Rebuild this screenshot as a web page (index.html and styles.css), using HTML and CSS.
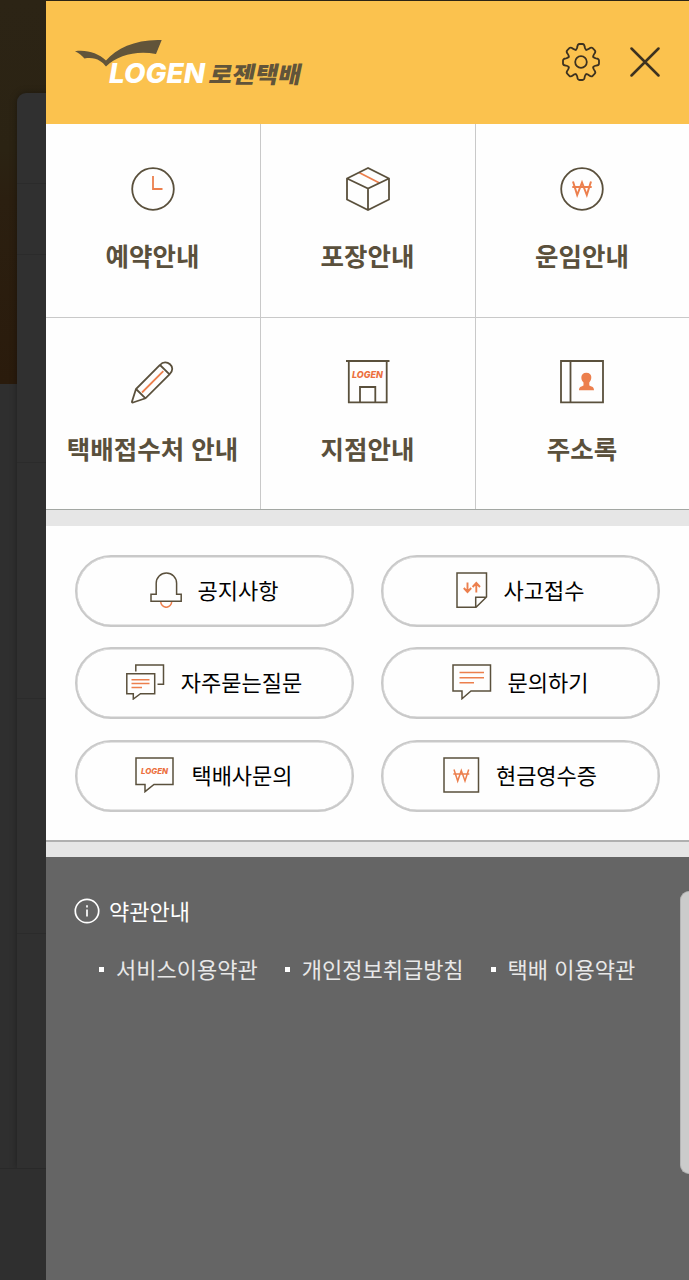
FILE: index.html
```html
<!DOCTYPE html>
<html lang="ko">
<head>
  <meta charset="UTF-8">
  <meta name="viewport" content="width=device-width, initial-scale=1.0">
  <title>로젠택배</title>
  <link rel="stylesheet" href="styles.css">
</head>
<body>

  <div class="backdrop">
    <div class="backdrop-photo"></div>
    <div class="backdrop-card"></div>
    <div class="backdrop-bottom"></div>
  </div>

  <div class="side-menu">
    <header class="menu-header">
      <svg class="logo" width="240" height="68" viewBox="0 -8 240 68">
        <path class="logo-bird" d="M1 15.200C13 13.500 24 17 32 24.500C43 12 62 3 87.700 4L82 18C62 14.500 44 19 32 30.500C28 25.500 22 20.500 10.500 22.500C8 19.500 5 17 1 15.200Z"/>
        <text class="logo-en" x="35" y="47" textLength="96" lengthAdjust="spacingAndGlyphs">LOGEN</text>
        <text class="logo-ko" transform="translate(134 47) skewX(-12)" textLength="92" lengthAdjust="spacingAndGlyphs">로젠택배</text>
      </svg>
      <div class="header-buttons">
        <svg class="icon-dark" width="40" height="40" viewBox="-20 -20 40 40">
          <defs>
            <path id="tooth" d="M-5.100 -12.300C-4 -12.800 -3.900 -13.600 -3.700 -15Q-3.400 -18 -1.500 -18H1.500Q3.400 -18 3.700 -15C3.900 -13.600 4 -12.800 5.100 -12.300"/>
          </defs>
          <use href="#tooth"/>
          <use href="#tooth" transform="rotate(45)"/>
          <use href="#tooth" transform="rotate(90)"/>
          <use href="#tooth" transform="rotate(135)"/>
          <use href="#tooth" transform="rotate(180)"/>
          <use href="#tooth" transform="rotate(225)"/>
          <use href="#tooth" transform="rotate(270)"/>
          <use href="#tooth" transform="rotate(315)"/>
          <circle r="5.800"/>
        </svg>
        <svg class="icon-dark icon-close" width="30" height="30" viewBox="0 0 30 30">
          <path d="M1.500 1.500L28.500 28.500M28.500 1.500L1.500 28.500"/>
        </svg>
      </div>
    </header>

    <nav class="main-grid">
      <a class="main-item">
        <svg class="icon" width="44" height="44" viewBox="0 0 44 44">
          <circle cx="22" cy="22" r="20.800"/>
          <path class="point" d="M22 9V22H31.500"/>
        </svg>
        <span>예약안내</span>
      </a>
      <a class="main-item">
        <svg class="icon" width="44" height="44" viewBox="0 0 44 44">
          <path class="point" d="M13 5.500L33.500 16"/>
          <path d="M22 1L1 11.500V32.500L22 43L43 32.500V11.500ZM1 11.500L22 21.500L43 11.500M22 21.500V43"/>
        </svg>
        <span>포장안내</span>
      </a>
      <a class="main-item">
        <svg class="icon" width="44" height="44" viewBox="0 0 44 44">
          <circle cx="22" cy="22" r="20.800"/>
          <path class="point won" d="M13 14.500L17.200 28L22 15.500L26.800 28L31 14.500M12.300 20H31.700"/>
        </svg>
        <span>운임안내</span>
      </a>
      <a class="main-item">
        <svg class="icon" width="44" height="44" viewBox="0 0 44 44">
          <path class="point" d="M11 32.500L32.300 11.200"/>
          <path d="M1 41.500L5 29L29 5C35 -2 46.500 7 38.500 14.300L14.500 38.300L2 42.500Q0.700 42.800 1 41.500ZM5 29L14.500 38.300M29 5L38.500 14.300"/>
        </svg>
        <span>택배접수처 안내</span>
      </a>
      <a class="main-item">
        <svg class="icon" width="44" height="44" viewBox="0 0 44 44">
          <path d="M0 1H43.500M2.800 1V42.300H40.700V1M14 42V27H29.300V42"/>
          <text class="shop-sign" x="6" y="17.700" textLength="31" lengthAdjust="spacingAndGlyphs">LOGEN</text>
        </svg>
        <span>지점안내</span>
      </a>
      <a class="main-item">
        <svg class="icon" width="44" height="44" viewBox="0 0 44 44">
          <path d="M1 1H43V42.300H1ZM10.500 1V42"/>
          <path class="person" d="M26.300 12.800C33 12.800 32 20 29.300 22.500V25.500C31 26.500 34 26.500 34 30.300H19C19 26.500 22 26.500 23.500 25.500V22.500C20.500 20 20 12.800 26.300 12.800Z"/>
        </svg>
        <span>주소록</span>
      </a>
    </nav>

    <section class="pill-grid">
      <a class="pill">
        <svg class="icon thin" width="32" height="36" viewBox="0 0 32 36">
          <path class="point" d="M10.700 29.500A5.500 5.800 0 0 0 21.700 29.500"/>
          <path d="M1 29.300V22.300H6.200V11.300A10.200 10.300 0 0 1 26.600 11.300V22.300H31.200V29.300Z"/>
        </svg>
        <span>공지사항</span>
      </a>
      <a class="pill">
        <svg class="icon thin" width="32" height="36" viewBox="0 0 32 36">
          <path d="M1 1H30.500V25L20 35.300H1ZM30.500 25.200H19.700V35.300"/>
          <path class="point arrows" d="M11.500 10.500V20M7.800 16L11.500 20L15.200 16M20.300 20.500V11M16.600 15L20.300 11L24 15"/>
        </svg>
        <span>사고접수</span>
      </a>
      <a class="pill">
        <svg class="icon thin" width="39" height="36" viewBox="0 0 39 36">
          <path d="M9.800 7.500V1H37.500V20.200H31.500M0.800 9.700H28.700V29.700H14.500L7.300 35V29.700H0.800Z"/>
          <path class="point" d="M5.500 15.700H23.500M5.500 19.500H23.500M5.500 23.500H16"/>
        </svg>
        <span>자주묻는질문</span>
      </a>
      <a class="pill">
        <svg class="icon thin" width="40" height="36" viewBox="0 0 40 36">
          <path d="M1 1H38.500V27H19L10 34.700V27H1Z"/>
          <path class="point" d="M7.500 8.500H32M7.500 13.700H32M7.500 18.700H22"/>
        </svg>
        <span>문의하기</span>
      </a>
      <a class="pill">
        <svg class="icon thin" width="40" height="36" viewBox="0 0 40 36">
          <path d="M1 1H38V27.500H19L10 34.700V27.500H1Z"/>
          <text class="bubble-sign" x="6" y="17" textLength="27" lengthAdjust="spacingAndGlyphs">LOGEN</text>
        </svg>
        <span>택배사문의</span>
      </a>
      <a class="pill">
        <svg class="icon thin" width="37" height="36" viewBox="0 0 37 36">
          <path d="M1 1H35.500V35H1Z"/>
          <path class="point" d="M11 12.500L14.700 24L18.300 13.500L22 24L25.700 12.500M10.300 17H26.300"/>
        </svg>
        <span>현금영수증</span>
      </a>
    </section>

    <footer class="terms">
      <h2 class="terms-title">
        <svg width="26" height="26" viewBox="0 0 26 26">
          <circle cx="13" cy="13" r="11.700"/>
          <path d="M13 7.300V9.500M13 11.500V18.500"/>
        </svg>
        <span>약관안내</span>
      </h2>
      <ul class="terms-list">
        <li><span>서비스이용약관</span></li>
        <li><span>개인정보취급방침</span></li>
        <li><span>택배 이용약관</span></li>
      </ul>
    </footer>
  </div>

  <div class="edge-handle"></div>

</body>
</html>
```
FILE: styles.css
```css
* {
  box-sizing: border-box;
}

body {
  margin: 0;
  display: flex;
  position: relative;
  height: 1280px;
  overflow: hidden;
  background: #2f2f2f;
  font-family: "Noto Sans CJK KR", "Noto Sans", sans-serif;
}

/* dimmed page behind the menu */
.backdrop {
  position: relative;
  width: 46px;
  height: 1280px;
  flex: none;
  overflow: hidden;
}

.backdrop-photo {
  height: 384px;
  background: linear-gradient(#2c2415 0, #2b2313 150px, #2b1f10 200px, #2a1b0c 384px);
}

.backdrop-card {
  position: absolute;
  left: 17px;
  top: 93px;
  width: 60px;
  height: 1075px;
  border-radius: 9px 0 0 0;
  background: linear-gradient(#2b2b2b, #2b2b2b) 0 90px / 100% 1px no-repeat,
    linear-gradient(#2b2b2b, #2b2b2b) 0 161px / 100% 1px no-repeat,
    linear-gradient(#2b2b2b, #2b2b2b) 0 369px / 100% 1px no-repeat,
    linear-gradient(#2b2b2b, #2b2b2b) 0 605px / 100% 1px no-repeat,
    linear-gradient(#2b2b2b, #2b2b2b) 0 840px / 100% 1px no-repeat,
    #303030;
  box-shadow: 0 0 7px rgba(0, 0, 0, 0.35);
}

.backdrop-bottom {
  position: absolute;
  left: 0;
  top: 1168px;
  width: 46px;
  height: 112px;
  background: #2f2f2f;
  border-top: 1px solid #292929;
}

.side-menu {
  flex: 1;
  display: flex;
  flex-direction: column;
  background: #fefefe;
}

.menu-header {
  height: 124px;
  padding: 0 29px 2px 28px;
  display: flex;
  align-items: center;
  justify-content: space-between;
  background: #fbc24e;
  border-top: 1px solid #2c2415;
}

.logo {
  overflow: visible;
}

.logo-bird {
  fill: #61543a;
}

.logo-en {
  font: italic 800 27px Inter, sans-serif;
  fill: #fff;
}

.logo-ko {
  font-size: 23px;
  font-weight: 900;
  fill: #61543a;
}

.header-buttons {
  display: flex;
  align-items: center;
  gap: 29px;
}

.icon-dark {
  fill: none;
  stroke: #3d3220;
  stroke-width: 1.8;
  stroke-linecap: round;
}

.icon-close {
  stroke-width: 2.5;
}

.main-grid {
  display: grid;
  grid-template-columns: 215px 215px 213px;
  grid-template-rows: 194px 191px;
  border-bottom: 1px solid #a3a7a3;
}

.main-item {
  display: flex;
  flex-direction: column;
  align-items: center;
  padding-top: 43px;
  padding-right: 1px;
  gap: 25px;
  border-right: 1px solid #c9c9c9;
  color: #5a503c;
  font-size: 25.5px;
  font-weight: 700;
  line-height: 38px;
  white-space: nowrap;
}

.main-item:nth-child(3n) {
  border-right: 0;
}

.main-item:nth-child(-n+3) {
  border-bottom: 1px solid #c9c9c9;
}

.main-item:nth-child(n+4) {
  padding-top: 42px;
}

.icon {
  flex: none;
  fill: none;
  stroke: #5a503c;
  stroke-width: 1.8;
}

.icon.thin {
  stroke-width: 1.5;
}

.icon .point {
  stroke: #ec7f4d;
}

.icon .won {
  stroke-width: 2;
}

.icon .arrows {
  stroke-width: 1.9;
}

.icon .person {
  fill: #ec7f4d;
  stroke: none;
}

.shop-sign,
.bubble-sign {
  font: italic 800 9.5px Inter, sans-serif;
  fill: #ec7040;
  stroke: none;
}

.bubble-sign {
  font-size: 8px;
}

.pill-grid {
  display: grid;
  grid-template-columns: 279px 279px;
  grid-auto-rows: 72px;
  gap: 20.4px 27px;
  padding: 29px 29px 29px;
  height: 347px;
  border-top: 16px solid #e6e6e6;
  border-bottom: 16px solid #e6e6e6;
  position: relative;
}

/* thin line above the lower gray band */
.pill-grid::after {
  content: "";
  position: absolute;
  left: 0;
  right: 0;
  bottom: -1px;
  height: 2px;
  background: #b0b0b0;
}

.pill {
  display: flex;
  align-items: center;
  justify-content: center;
  gap: 16px;
  padding: 0 1px 2px 0;
  border: 2px solid #c9c9c9;
  box-shadow: inset 0 0 0 0.5px #c9c9c9;
  border-radius: 36px;
  color: #000;
  font-size: 22px;
  font-weight: 400;
  line-height: 32px;
}

.pill span {
  padding-bottom: 2px;
}

.terms {
  flex: 1;
  padding: 38px 28px;
  background: #656565;
}

.terms-title {
  display: flex;
  align-items: center;
  gap: 9px;
  margin: 0;
  color: #fff;
  font-size: 22px;
  font-weight: 400;
  line-height: 32px;
}

.terms-title span {
  margin: -1px 0 1px;
}

.terms-title svg {
  fill: none;
  stroke: #fff;
  stroke-width: 1.7;
}

.terms-list {
  display: flex;
  gap: 27px;
  margin: 26px 0 0;
  padding: 0 0 0 25px;
  list-style: none;
  color: #e8e8e8;
  font-size: 22px;
  font-weight: 400;
  line-height: 32px;
  white-space: nowrap;
}

.terms-list li {
  display: flex;
  align-items: center;
  gap: 12px;
}

.terms-list span {
  margin: -1px 0 1px;
}

.terms-list li::before {
  content: "";
  width: 5px;
  height: 5px;
  background: #fff;
}

.edge-handle {
  position: absolute;
  right: 0;
  top: 891px;
  width: 9px;
  height: 283px;
  border-radius: 9px 0 0 9px;
  background: #cbcbcb;
  border: 1px solid #b5b5b5;
  border-right: 0;
}
```
